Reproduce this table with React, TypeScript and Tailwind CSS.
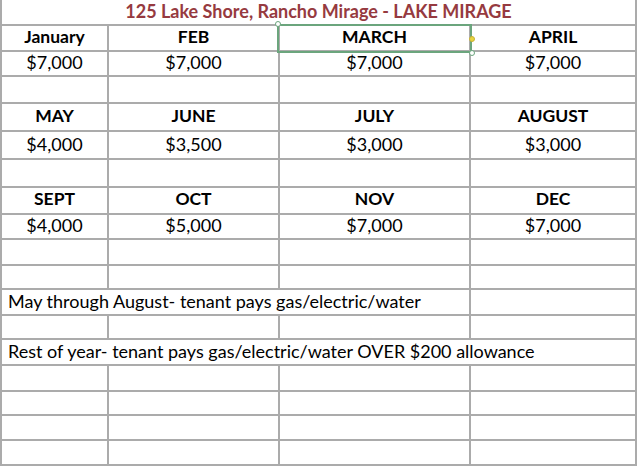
import React from 'react';

type Cell = { text?: string; bold?: boolean; span?: number; align?: 'left' | 'center' };

const blank: Cell[] = [{}, {}, {}, {}];

const rows: Cell[][] = [
  [
    { text: 'January', bold: true },
    { text: 'FEB', bold: true },
    { text: 'MARCH', bold: true },
    { text: 'APRIL', bold: true },
  ],
  [{ text: '$7,000' }, { text: '$7,000' }, { text: '$7,000' }, { text: '$7,000' }],
  blank,
  [
    { text: 'MAY', bold: true },
    { text: 'JUNE', bold: true },
    { text: 'JULY', bold: true },
    { text: 'AUGUST', bold: true },
  ],
  [{ text: '$4,000' }, { text: '$3,500' }, { text: '$3,000' }, { text: '$3,000' }],
  blank,
  [
    { text: 'SEPT', bold: true },
    { text: 'OCT', bold: true },
    { text: 'NOV', bold: true },
    { text: 'DEC', bold: true },
  ],
  [{ text: '$4,000' }, { text: '$5,000' }, { text: '$7,000' }, { text: '$7,000' }],
  blank,
  blank,
  [{ text: 'May through August- tenant pays gas/electric/water', span: 3, align: 'left' }, {}],
  blank,
  [{ text: 'Rest of year- tenant pays gas/electric/water OVER $200 allowance', span: 4, align: 'left' }],
  blank,
  blank,
  blank,
  blank,
];

function GridCell({ cell }: { cell: Cell }) {
  const span =
    cell.span === 4 ? 'col-span-4' : cell.span === 3 ? 'col-span-3' : cell.span === 2 ? 'col-span-2' : '';
  return (
    <div
      className={`${span} bg-white flex items-center overflow-hidden whitespace-nowrap leading-none text-black pb-[3px] ${
        cell.align === 'left' ? 'justify-start pl-[6px]' : 'justify-center'
      } ${cell.bold ? 'font-bold text-[17.5px]' : 'font-normal text-[18px]'}`}
    >
      {cell.text}
    </div>
  );
}

export default function App() {
  return (
    <div className="w-[640px] h-[468px] bg-white relative overflow-hidden" style={{ fontFamily: 'Lato, "Open Sans", sans-serif' }}>
      <div className="w-[637px] bg-[#ababab] px-[2px] pb-[2px] grid gap-[2px] grid-cols-[105px_169px_189px_164px] grid-rows-[24px_24px_23px_25px_26px_26px_26px_25px_23px_24px_22px_24px_22px_24px_24px_22px_23px_23px]">
        <div className="col-span-4 bg-white flex items-center justify-center pb-[2px] text-[18px] leading-none font-bold text-[#963a40]">
          125 Lake Shore, Rancho Mirage - LAKE MIRAGE
        </div>
        {rows.map((row, i) => row.map((cell, j) => <GridCell key={`${i}-${j}`} cell={cell} />))}
      </div>

      {/* selected cell */}
      <div className="absolute left-[277px] top-[24px] w-[195px] h-[29px] border-2 border-[#6ba57d]" />
      <div className="absolute left-[275px] top-[21px] w-[6px] h-[6px] rounded-full bg-white border border-[#6ba57d]" />
      <div className="absolute left-[469px] top-[36px] w-[6px] h-[6px] rounded-full bg-[#e8d440] border border-[#c9b236]" />
      <div className="absolute left-[469px] top-[50px] w-[6px] h-[6px] rounded-full bg-white border border-[#6ba57d]" />
    </div>
  );
}
